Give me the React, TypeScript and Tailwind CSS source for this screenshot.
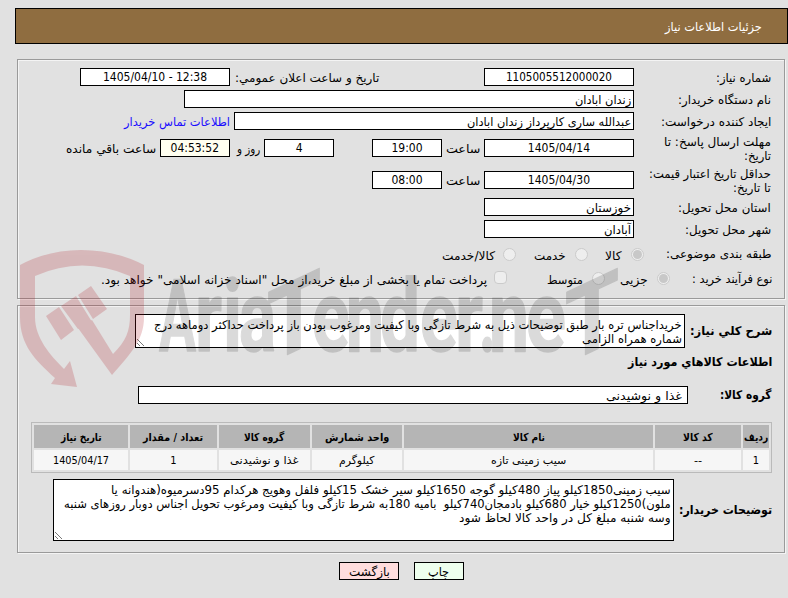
import { useLayoutEffect, useRef, useState, type ReactNode } from "react"
import clsx from "clsx"

// Text squeezed or stretched to a fixed width
function Fit({ w, children, className }: { w: number; children: string; className?: string }) {
  const ref = useRef<HTMLSpanElement>(null)
  const [scale, setScale] = useState(1)

  useLayoutEffect(() => {
    if (ref.current) setScale(w / ref.current.offsetWidth)
  }, [w, children])

  return (
    <span className={clsx("flex shrink-0 whitespace-pre", className)} style={{ width: w }}>
      <span ref={ref} className="block shrink-0 origin-right" style={{ transform: `scaleX(${scale})` }}>
        {children}
      </span>
    </span>
  )
}

function Row({ className, children }: { className?: string; children: ReactNode }) {
  return <div className={clsx("flex shrink-0 items-center", className ?? "h-[22px]")}>{children}</div>
}

function Label({ lines }: { lines: [string, number][] }) {
  return (
    <div className="w-[138px] shrink-0 pt-0.5 pr-px">
      {lines.map(([text, w]) => (
        <Fit key={text} w={w}>{text}</Fit>
      ))}
    </div>
  )
}

function Field({ text, w, className }: { text: string; w: number; className: string }) {
  return (
    <div className={clsx("flex h-[18px] shrink-0 items-center border border-black px-0.5", className)}>
      <Fit w={w}>{text}</Fit>
    </div>
  )
}

function Radio({ checked, className }: { checked?: boolean; className?: string }) {
  return (
    <span
      className={clsx(
        "flex size-[13px] shrink-0 items-center justify-center rounded-full border border-[#cbcbcb] bg-[#eee]",
        className
      )}
    >
      {checked && <span className="size-[9px] rounded-full bg-[#c8c8c8]" />}
    </span>
  )
}

function Grip() {
  return (
    <svg className="absolute bottom-0 left-0 size-[9px]" viewBox="0 0 9 9" stroke="#555" strokeWidth="0.8">
      <path d="M1 1L8 8M1 5L4 8" />
    </svg>
  )
}

const panel = "mr-[3px] ml-[17px] border border-[#9a9a9a] pr-3 shadow-[inset_1px_1px_0_#f4f4f4,1px_1px_0_#f4f4f4]"

const columns = [
  { head: "ردیف", headW: 24, value: "1", valueW: 6, size: "w-[26px]" },
  { head: "کد کالا", headW: 30, value: "--", valueW: 8, size: "w-[86px]" },
  { head: "نام کالا", headW: 32, value: "سیب زمینی تازه", valueW: 75, size: "w-[249px]" },
  { head: "واحد شمارش", headW: 64, value: "کیلوگرم", valueW: 35, size: "w-[90px]" },
  { head: "گروه کالا", headW: 40, value: "غذا و نوشیدنی", valueW: 69, size: "w-[91px]" },
  { head: "تعداد / مقدار", headW: 60, value: "1", valueW: 6, size: "w-[87px]" },
  { head: "تاریخ نیاز", headW: 41, value: "1405/04/17", valueW: 56, size: "w-[94px]" },
]

// [letter, x, width]
const wordmark: [string, number, number][] = [
  ["A", 159, 37],
  ["r", 195, 27],
  ["i", 223, 19],
  ["a", 239, 37],
  ["e", 312, 38],
  ["n", 346, 38],
  ["d", 380, 40],
  ["e", 420, 38],
  ["r", 455, 28],
  [".", 479, 17],
  ["n", 489, 40],
  ["e", 526, 40],
]

function Watermark() {
  return (
    <svg className="pointer-events-none absolute inset-0" width="788" height="598" viewBox="0 0 788 598">
      <g fill="#af141e" opacity="0.2">
        <path d="M20 265Q48 250 81 250Q115 250 144 265V317C144 340 131 353 112 375L78 328L92 320L113 354C126 341 130 331 130 315V276Q82 255 35 276V317C35 338 50 355 64 369L70 361L77 387L51 384L55 378C35 360 20 345 20 317Z" />
        <path d="M46 316L59 307L74 330L61 340ZM61 306L76 296L92 322L78 329ZM78 295L91 286L107 309L93 319Z" />
      </g>
      <g
        fill="#000"
        opacity="0.14"
        direction="ltr"
        fontFamily="Roboto, 'Liberation Sans', sans-serif"
        fontSize="100"
        fontWeight="700"
        stroke="#000"
        strokeWidth="1.5"
        strokeLinejoin="round"
      >
        {wordmark.map(([letter, x, w]) => (
          <text key={x} x={x} y="351" textLength={w} lengthAdjust="spacingAndGlyphs">
            {letter}
          </text>
        ))}
        <text transform="translate(267 364) skewY(-25)" textLength="54" lengthAdjust="spacingAndGlyphs">T</text>
        <text transform="translate(565 364) skewY(-25)" textLength="54" lengthAdjust="spacingAndGlyphs">T</text>
      </g>
    </svg>
  )
}

export default function App() {
  return (
    <div
      dir="rtl"
      className="relative h-[598px] w-[788px] overflow-hidden bg-[#e1e1e1] pt-2 font-['DejaVu_Sans_Condensed','DejaVu_Sans',sans-serif] text-[12px] leading-[14px] text-black"
    >
      <header className="ml-[15px] flex h-9 items-center border border-black bg-[#8f6d40] pt-0.5 pr-[25px] text-white">
        <Fit w={97}>جزئیات اطلاعات نیاز</Fit>
      </header>

      {/* Request details */}
      <section className={clsx(panel, "mt-[15px] h-60 pt-1.5")}>
        <Row>
          <Label lines={[["شماره نیاز:", 55]]} />
          <Field text="1105005512000020" w={106} className="w-[150px] justify-center bg-white" />
          <Fit w={144} className="mr-[105px] pt-0.5">تاریخ و ساعت اعلان عمومي:</Fit>
          <Field text="1405/04/10 - 12:38" w={104} className="mr-[5px] w-[150px] justify-center bg-white [direction:ltr]" />
        </Row>
        <Row>
          <Label lines={[["نام دستگاه خریدار:", 93]]} />
          <Field text="زندان ابادان" w={56} className="w-[450px] bg-white pt-0.5" />
        </Row>
        <Row>
          <Label lines={[["ایجاد کننده درخواست:", 110]]} />
          <Field text="عبدالله ساری کارپرداز زندان ابادان" w={164} className="w-[400px] bg-white pt-0.5" />
          <Fit w={106} className="mr-1 pt-0.5 text-[#1a0dff]">اطلاعات تماس خریدار</Fit>
        </Row>
        <Row className="h-8">
          <Label lines={[["مهلت ارسال پاسخ: تا", 107], ["تاریخ:", 27]]} />
          <Field text="1405/04/14" w={62} className="w-[150px] justify-center bg-white" />
          <Fit w={34} className="mr-1 pt-0.5">ساعت</Fit>
          <Field text="19:00" w={31} className="mr-1 w-[70px] justify-center bg-white" />
          <Field text="4" w={7} className="mr-[38px] w-[70px] justify-center bg-white" />
          <Fit w={23} className="mr-1 pt-0.5">روز و</Fit>
          <Field text="04:53:52" w={48} className="mr-[7px] w-[70px] justify-center bg-[#fffff0]" />
          <Fit w={90} className="mr-1 pt-0.5">ساعت باقي مانده</Fit>
        </Row>
        <Row className="h-8">
          <Label lines={[["حداقل تاریخ اعتبار قیمت:", 122], ["تا تاریخ:", 38]]} />
          <Field text="1405/04/30" w={62} className="w-[150px] justify-center bg-white" />
          <Fit w={34} className="mr-1 pt-0.5">ساعت</Fit>
          <Field text="08:00" w={31} className="mr-1 w-[70px] justify-center bg-white" />
        </Row>
        <Row>
          <Label lines={[["استان محل تحویل:", 93]]} />
          <Field text="خوزستان" w={45} className="w-[150px] bg-white pt-0.5" />
        </Row>
        <Row>
          <Label lines={[["شهر محل تحویل:", 86]]} />
          <Field text="آبادان" w={27} className="w-[150px] bg-white pt-0.5" />
        </Row>
        <Row className="h-7">
          <Fit w={106}>طبقه بندی موضوعی:</Fit>
          <Radio checked className="mr-[22px]" />
          <Fit w={17} className="mr-[9px] pt-1">کالا</Fit>
          <Radio className="mr-[17px]" />
          <Fit w={32} className="mr-[9px] pt-1">خدمت</Fit>
          <Radio className="mr-[18px]" />
          <Fit w={53} className="mr-2 pt-1">کالا/خدمت</Fit>
        </Row>
        <Row className="-mt-px h-[22px]">
          <Fit w={80} className="pt-0.5">نوع فرآیند خرید :</Fit>
          <Radio checked className="mr-[22px]" />
          <Fit w={28} className="mr-[9px] pt-1">جزیی</Fit>
          <Radio className="mr-[15px]" />
          <Fit w={36} className="mr-[9px] pt-1">متوسط</Fit>
          <span className="mr-10 mb-0.5 size-[13px] shrink-0 rounded-sm border border-[#cbcbcb] bg-[#eee]" />
          <Fit w={386} className="mr-[7px] pt-1">
            پرداخت تمام یا بخشی از مبلغ خرید،از محل "اسناد خزانه اسلامی" خواهد بود.
          </Fit>
        </Row>
      </section>

      {/* Goods */}
      <section className={clsx(panel, "mt-1.5 h-[248px] pt-2")}>
        <Row className="h-[34px]">
          <Fit w={82} className="font-bold">شرح کلي نیاز:</Fit>
          <div className="relative mr-[5px] h-[34px] w-[550px] border border-black bg-white px-0.5 pt-[3px]">
            <Fit w={528}>خریداجناس تره بار طبق توضیحات ذیل به شرط تازگی وبا کیفیت ومرغوب بودن باز پرداخت حداکثر دوماهه درج</Fit>
            <Fit w={100}>شماره همراه الزامی</Fit>
            <Grip />
          </div>
        </Row>
        <Row className="h-7">
          <Fit w={144} className="font-bold">اطلاعات کالاهاي مورد نیاز</Fit>
        </Row>
        <Row className="mt-2.5 h-[18px]">
          <Fit w={52} className="font-bold">گروه کالا:</Fit>
          <Field text="غذا و نوشیدنی" w={76} className="mr-8 w-[550px] bg-white pt-0.5 pr-[5px]" />
        </Row>

        <table className="mt-[18px] block h-[51px] w-[741px] border border-[#bababa] p-0.5 text-[11px]">
          <thead className="block">
            <tr className="flex gap-0.5">
              {columns.map((col) => (
                <th key={col.head} className={clsx("flex h-[23px] items-center justify-center bg-[#b5b5b5] pt-0.5", col.size)}>
                  <Fit w={col.headW}>{col.head}</Fit>
                </th>
              ))}
            </tr>
          </thead>
          <tbody className="mt-0.5 block">
            <tr className="flex gap-0.5">
              {columns.map((col) => (
                <td key={col.head} className={clsx("flex h-5 items-center justify-center bg-[#f6f6f6] pt-0.5", col.size)}>
                  <Fit w={col.valueW}>{col.value}</Fit>
                </td>
              ))}
            </tr>
          </tbody>
        </table>

        <Row className="mt-1.5 h-[62px]">
          <Fit w={93} className="font-bold">توضیحات خریدار:</Fit>
          <div className="relative mr-[5px] h-[62px] w-[621px] border border-black bg-white px-0.5 pt-[3px]">
            <Fit w={560}>سیب زمینی1850کیلو پیاز 480کیلو گوجه 1650کیلو سیر خشک 15کیلو فلفل وهویج هرکدام 95دسرمیوه(هندوانه یا</Fit>
            <Fit w={607}>ملون)1250کیلو خیار 680کیلو بادمجان740کیلو  بامیه 180به شرط تازگی وبا کیفیت ومرغوب تحویل اجناس دوبار روزهای شنبه</Fit>
            <Fit w={212}>وسه شنبه مبلغ کل در واحد کالا لحاظ شود</Fit>
            <Grip />
          </div>
        </Row>
      </section>

      <footer className="mt-[9px] mr-[324px] flex gap-[15px]">
        <button className="flex h-[18px] w-[50px] items-center justify-center border border-black bg-[#efe] pt-0.5">
          <Fit w={21}>چاپ</Fit>
        </button>
        <button className="flex h-[18px] w-[60px] items-center justify-center border border-black bg-[#fdd] pt-0.5">
          <Fit w={41}>بازگشت</Fit>
        </button>
      </footer>

      <Watermark />
    </div>
  )
}
